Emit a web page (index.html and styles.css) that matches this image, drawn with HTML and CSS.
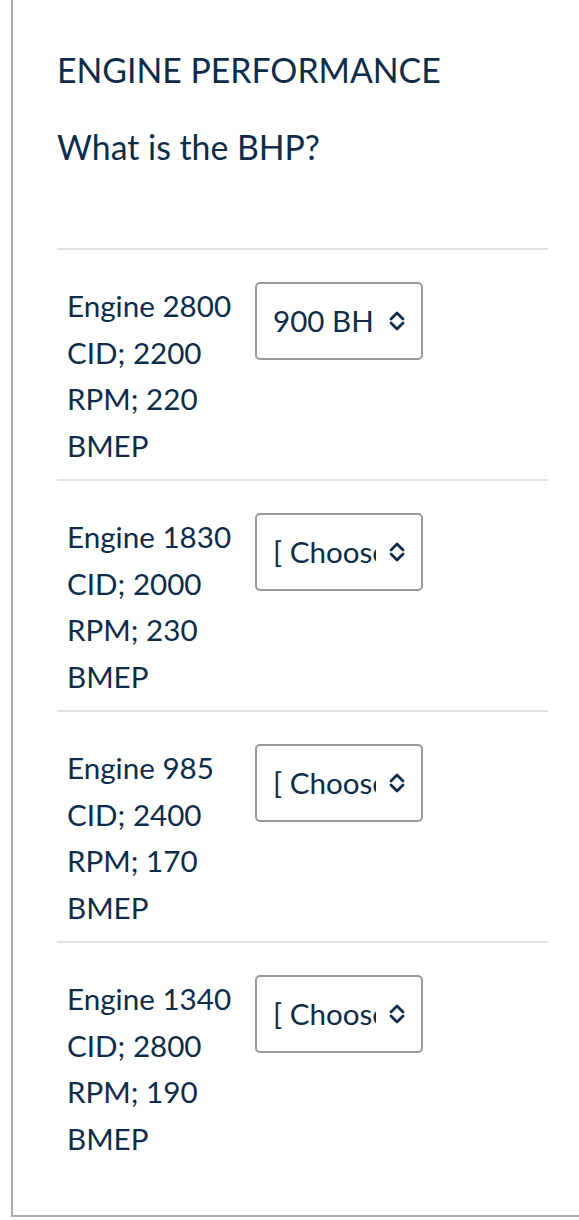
FILE: index.html
```html
<!DOCTYPE html>
<html>
<head>
<meta charset="utf-8">
<link rel="stylesheet" href="styles.css">
</head>
<body>
<div class="frame">
  <div class="content">
    <h1 class="title">ENGINE PERFORMANCE</h1>
    <p class="question">What is the BHP?</p>
    <div class="rows">
      <div class="row">
        <div class="label">Engine 2800 CID; 2200 RPM; 220 BMEP</div>
        <div class="select">
          <span class="value">900 BHP</span>
          <svg class="chev" width="18" height="24" viewBox="0 0 18 24"><path d="M3 10 L9 4 L15 10 M3 14 L9 20 L15 14" fill="none" stroke="#0c2c4a" stroke-width="2.8" stroke-linecap="round" stroke-linejoin="round"/></svg>
        </div>
      </div>
      <div class="row">
        <div class="label">Engine 1830 CID; 2000 RPM; 230 BMEP</div>
        <div class="select">
          <span class="value">[ Choose ]</span>
          <svg class="chev" width="18" height="24" viewBox="0 0 18 24"><path d="M3 10 L9 4 L15 10 M3 14 L9 20 L15 14" fill="none" stroke="#0c2c4a" stroke-width="2.8" stroke-linecap="round" stroke-linejoin="round"/></svg>
        </div>
      </div>
      <div class="row">
        <div class="label">Engine 985 CID; 2400 RPM; 170 BMEP</div>
        <div class="select">
          <span class="value">[ Choose ]</span>
          <svg class="chev" width="18" height="24" viewBox="0 0 18 24"><path d="M3 10 L9 4 L15 10 M3 14 L9 20 L15 14" fill="none" stroke="#0c2c4a" stroke-width="2.8" stroke-linecap="round" stroke-linejoin="round"/></svg>
        </div>
      </div>
      <div class="row">
        <div class="label">Engine 1340 CID; 2800 RPM; 190 BMEP</div>
        <div class="select">
          <span class="value">[ Choose ]</span>
          <svg class="chev" width="18" height="24" viewBox="0 0 18 24"><path d="M3 10 L9 4 L15 10 M3 14 L9 20 L15 14" fill="none" stroke="#0c2c4a" stroke-width="2.8" stroke-linecap="round" stroke-linejoin="round"/></svg>
        </div>
      </div>
    </div>
  </div>
</div>
</body>
</html>
```
FILE: styles.css
```css
html, body {
  margin: 0;
  padding: 0;
  background: #fff;
}
body {
  font-family: Lato, "Noto Sans", sans-serif;
  color: #0c2c4a;
}
.frame {
  margin-left: 11px;
  height: 1217px;
  box-sizing: border-box;
  border-left: 2px solid #ababab;
  border-bottom: 2px solid #ababab;
}
.content {
  padding: 0 31px 0 44px;
}
.title {
  margin: 0;
  padding-top: 50px;
  font-size: 33.8px;
  font-weight: 400;
  line-height: 40px;
}
.question {
  margin: 0;
  padding-top: 37px;
  font-size: 33.8px;
  line-height: 40px;
}
.rows {
  margin-top: 81px;
}
.row {
  border-top: 2px solid #e2e2e2;
  display: flex;
  align-items: flex-start;
  padding: 33px 0 10px 10px;
}
.label {
  width: 175px;
  margin-right: 13px;
  font-size: 29.6px;
  line-height: 46.5px;
}
.select {
  width: 168px;
  height: 78px;
  box-sizing: border-box;
  border: 2px solid #9a9a9a;
  border-radius: 5px;
  display: flex;
  align-items: center;
  padding-left: 16px;
  margin-top: -1px;
}
.value {
  width: 103px;
  overflow: hidden;
  white-space: nowrap;
  font-size: 29.6px;
  line-height: 34px;
}
.chev {
  margin-left: 12px;
  display: block;
}
```
